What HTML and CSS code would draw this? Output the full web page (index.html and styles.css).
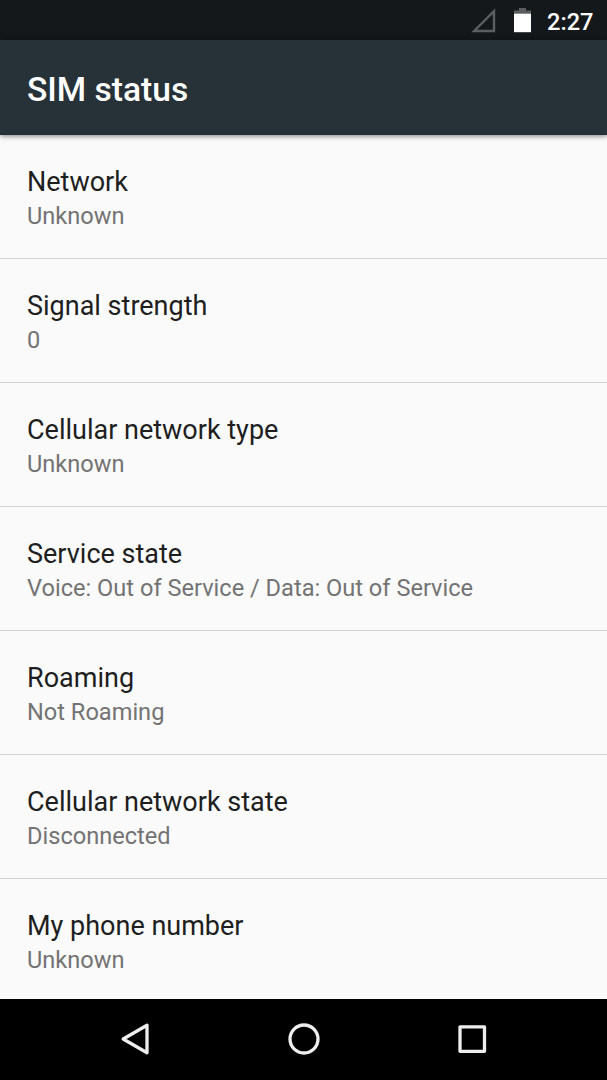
FILE: index.html
```
<!DOCTYPE html>
<html lang="en">
<head>
    <meta charset="UTF-8">
    <meta name="viewport" content="width=device-width, initial-scale=1.0">
    <title>SIM status</title>
    <link rel="stylesheet" href="styles.css">
</head>
<body>
    <div class="status-bar">
        <svg class="signal" width="25" height="26" viewBox="0 0 25 26">
            <path d="M23 4.200V24H3.200Z" fill="none" stroke="#5c5f60" stroke-width="2.400"/>
        </svg>
        <svg class="battery" width="17" height="26" viewBox="0 0 17 26">
            <path d="M5 1h7v2.500h5V7H0V3.500h5z" fill="#5c5f60"/>
            <path d="M0 6.700h17v18.500H0z" fill="#fff"/>
        </svg>
        <span class="clock">2:27</span>
    </div>

    <header class="toolbar">
        <h1>SIM status</h1>
    </header>

    <main class="list">
        <div class="item">
            <h2>Network</h2>
            <p>Unknown</p>
        </div>
        <div class="item">
            <h2>Signal strength</h2>
            <p>0</p>
        </div>
        <div class="item">
            <h2>Cellular network type</h2>
            <p>Unknown</p>
        </div>
        <div class="item">
            <h2>Service state</h2>
            <p>Voice: Out of Service / Data: Out of Service</p>
        </div>
        <div class="item">
            <h2>Roaming</h2>
            <p>Not Roaming</p>
        </div>
        <div class="item">
            <h2>Cellular network state</h2>
            <p>Disconnected</p>
        </div>
        <div class="item">
            <h2>My phone number</h2>
            <p>Unknown</p>
        </div>
    </main>

    <nav class="nav-bar">
        <svg width="36" height="36" viewBox="0 0 36 36">
            <path d="M29 4.200v27.600L5.200 18z" fill="none" stroke="#eee" stroke-width="3.300" stroke-linejoin="round"/>
        </svg>
        <svg width="36" height="36" viewBox="0 0 36 36">
            <circle cx="18" cy="18" r="14" fill="none" stroke="#eee" stroke-width="3.300"/>
        </svg>
        <svg width="36" height="36" viewBox="0 0 36 36">
            <rect x="6" y="5.800" width="24.500" height="24.500" fill="none" stroke="#eee" stroke-width="3.300" stroke-linejoin="round"/>
        </svg>
    </nav>
</body>
</html>
```
FILE: styles.css
```
body {
    margin: 0;
    display: flex;
    flex-direction: column;
    height: 100vh;
    overflow: hidden;
    background-color: #fafafa;
    font-family: Roboto, sans-serif;
}

.status-bar {
    box-sizing: border-box;
    display: flex;
    flex: none;
    align-items: center;
    justify-content: flex-end;
    height: 40px;
    padding-right: 13.5px;
    background-color: #14181b;
}

.signal {
    margin-right: 18px;
}

.battery {
    margin-right: 16px;
}

.clock {
    padding-top: 3px;
    color: #fff;
    font-size: 23.6px;
    font-weight: 500;
}

.toolbar {
    box-sizing: border-box;
    display: flex;
    flex: none;
    align-items: center;
    height: 95px;
    padding: 4px 27px 0;
    background-color: #263238;
    box-shadow: 0 1px 5px rgba(0, 0, 0, 0.5);
    z-index: 1;
}

.toolbar h1 {
    margin: 0;
    color: #fff;
    font-size: 33.6px;
    font-weight: 500;
}

.list {
    flex: 1;
    overflow: hidden;
}

.item {
    box-sizing: border-box;
    height: 124px;
    padding: 29px 27px 0;
    border-bottom: 1px solid #d4d4d4;
}

.item h2 {
    margin: 0;
    color: #1e1e1e;
    font-size: 27px;
    font-weight: 400;
    line-height: 36px;
}

.item p {
    margin: 0;
    color: #737373;
    font-size: 23.6px;
    line-height: 32px;
}

.nav-bar {
    box-sizing: border-box;
    display: flex;
    flex: none;
    align-items: center;
    justify-content: center;
    gap: 132px;
    height: 81px;
    padding-bottom: 1px;
    background-color: #000;
}
```
